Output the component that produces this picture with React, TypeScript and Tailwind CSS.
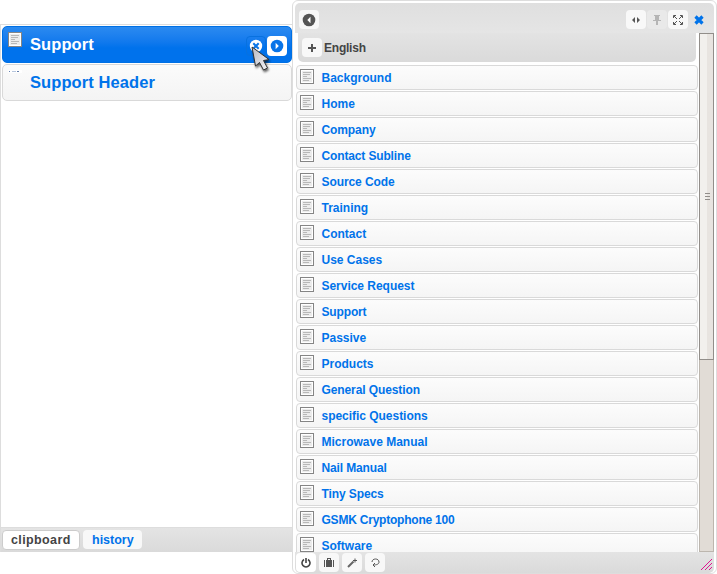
import React from "react";

const pages: { name: string; tracking?: string }[] = [
  { name: "Background" },
  { name: "Home" },
  { name: "Company", tracking: "tracking-[-0.1px]" },
  { name: "Contact Subline", tracking: "tracking-[-0.14px]" },
  { name: "Source Code", tracking: "tracking-[-0.08px]" },
  { name: "Training" },
  { name: "Contact" },
  { name: "Use Cases" },
  { name: "Service Request", tracking: "tracking-[-0.03px]" },
  { name: "Support", tracking: "tracking-[-0.15px]" },
  { name: "Passive" },
  { name: "Products" },
  { name: "General Question", tracking: "tracking-[-0.1px]" },
  { name: "specific Questions", tracking: "tracking-[-0.03px]" },
  { name: "Microwave Manual" },
  { name: "Nail Manual", tracking: "tracking-[-0.14px]" },
  { name: "Tiny Specs", tracking: "tracking-[-0.1px]" },
  { name: "GSMK Cryptophone 100", tracking: "tracking-[-0.22px]" },
  { name: "Software" },
];

function PageIcon() {
  return (
    <svg width="14" height="15" viewBox="0 0 14 15" shapeRendering="crispEdges" className="block shrink-0">
      <rect x="0.5" y="0.5" width="13" height="14" fill="#fff" stroke="#858585" />
      <rect x="2" y="2" width="10" height="11" fill="#ececec" />
      <path d="M3 3.5h8M3 5.5h7M3 7.5h4M3 9.5h8M3 11.5h6" stroke="#b8b8b8" />
    </svg>
  );
}

function Btn({ children, className = "bg-[#f8f8f8]" }: { children?: React.ReactNode; className?: string }) {
  return <div className={`flex h-[19px] w-[20px] shrink-0 items-center justify-center rounded-[4px] ${className}`}>{children}</div>;
}

function Clipboard() {
  return (
    <section className="mt-6 flex h-[528px] w-[292px] flex-col border-l border-t border-[#ddd] bg-white">
      <div className="ml-px mt-px flex h-[37px] w-[290px] items-start rounded-[5px] border border-[#0070e4] bg-linear-to-b from-[#2b8af0] to-[#0072ec] to-60%">
        <div className="ml-[5px] mt-[5px]"><PageIcon /></div>
        <div className="ml-[8px] mt-[7px] w-[212px] text-[16.5px] leading-5 tracking-[0.08px] text-white">Support</div>
        <div className="ml-[4px] mt-[9px] flex h-[20px] w-[20px] items-center justify-center rounded-[4px] border border-[#0871df]">
          <svg width="14" height="14" viewBox="0 0 14 14"><circle cx="7" cy="7" r="6.2" fill="#fff" /><path d="m4.3 4.3 5.4 5.4m0-5.4-5.4 5.4" stroke="#0874e8" strokeWidth="2" /></svg>
        </div>
        <div className="ml-px mt-[9px] flex h-[20px] w-[20px] items-center justify-center rounded-[4px] bg-white">
          <svg width="14" height="14" viewBox="0 0 14 14"><circle cx="7" cy="7" r="6.3" fill="#0874e8" /><path d="m5.6 3.8 3.2 3.2-3.2 3.2z" fill="#fff" /></svg>
        </div>
      </div>
      <div className="ml-px mt-px flex h-[37px] w-[290px] items-start rounded-[5px] border border-[#d9d9d9] bg-linear-to-b from-[#fbfbfb] to-[#f4f4f4]">
        <svg width="14" height="3" viewBox="0 0 14 3" shapeRendering="crispEdges" className="ml-[5px] mt-[5px]"><rect width="14" height="3" fill="#fff" /><path d="M1 1.5h1M9 1.5h2" stroke="#647fad" /><path d="M4 1.5h4" stroke="#b7c6dd" /></svg>
        <div className="ml-[8px] mt-[7px] text-[16.5px] leading-5 tracking-[0.08px]">Support Header</div>
      </div>
      <div className="mt-auto flex h-[25px] gap-[3px] border-t border-[#ddd] bg-linear-to-b from-[#e4e4e4] to-[#dadada] pl-px pt-[2px] text-[12.5px] leading-[19px]">
        <div className="h-[20px] w-[78px] rounded-[4px] border border-[#ccc] bg-white pl-[8px] tracking-[0.38px] text-[#444]">clipboard</div>
        <div className="h-[19px] w-[59px] rounded-[4px] bg-[#f8f8f8] pl-[9px] pt-px tracking-[0px]">history</div>
      </div>
    </section>
  );
}

export default function App() {
  return (
    <main className="relative flex h-[574px] w-[717px] overflow-hidden bg-white font-['Liberation_Sans',Arial,sans-serif] font-bold text-[#0073ea]">
      <Clipboard />
      <section className="flex h-[574px] w-[425px] flex-col rounded-[6px] border border-[#ddd] bg-white px-[2px] pb-0 pt-[2px]">
        <header className="flex h-[30px] items-start rounded-[5px] rounded-b-none bg-linear-to-b from-[#dfdfdf] to-[#e5e5e5] pl-[4px] pt-[7px]">
          <Btn>
            <svg width="14" height="14" viewBox="0 0 14 14"><circle cx="7" cy="7" r="6.3" fill="#555" /><path d="m8.5 3.8-3.2 3.2 3.2 3.2z" fill="#fff" /></svg>
          </Btn>
          <div className="ml-auto mr-[5px] flex gap-[1px]">
            <Btn><svg width="8" height="6" viewBox="0 0 8 6"><path d="M0 3 3 0v6zM8 3 5 0v6z" fill="#555" /></svg></Btn>
            <Btn className="bg-[#e9e9e9]"><svg width="8" height="10" viewBox="0 0 8 10" fill="#b5b5b5" shapeRendering="crispEdges"><path d="M1 0h6v1H6v4h2v1H0V5h2V1H1zM3 6h2v4H3z" /></svg></Btn>
            <Btn><svg width="10" height="10" viewBox="0 0 10 10" fill="none" stroke="#555"><path d="M3 .5H.5V3M7 .5h2.5V3M.5 7v2.5H3M9.5 7v2.5H7M1 1l3 3m5-3L6 4M1 9l3-3m5 3L6 6" /></svg></Btn>
            <Btn className=""><svg width="10" height="10" viewBox="0 0 10 10"><path d="m1.5 1.5 7 7m0-7-7 7" stroke="#0073ea" strokeWidth="3.2" /></svg></Btn>
          </div>
        </header>
        <div className="flex h-[519px] shrink-0 overflow-hidden">
          <div className="w-[403px] shrink-0">
            <div className="ml-[3px] flex h-[29px] w-[398px] rounded-b-[5px] bg-linear-to-b from-[#e3e3e3] to-[#dadada] pl-[4px] pt-[5px] text-[12px] leading-[20px] text-[#444]">
              <Btn><svg width="8" height="8" viewBox="0 0 8 8" shapeRendering="crispEdges"><path d="M3 0h2v3h3v2H5v3H3V5H0V3h3z" fill="#555" /></svg></Btn>
              <span className="ml-[2px] tracking-[-0.22px]">English</span>
            </div>
            <div className="ml-px mt-[3px] flex w-[402px] flex-col gap-px">
              {pages.map(({ name, tracking = "" }) => (
                <div key={name} className="flex h-[25px] shrink-0 items-start rounded-[4px] border border-[#d9d9d9] bg-linear-to-b from-[#fcfcfc] to-[#f5f5f5] pl-[3px] pt-[3px]">
                  <PageIcon />
                  <span className={`ml-[7.5px] text-[12px] leading-[18px] ${tracking}`}>{name}</span>
                </div>
              ))}
            </div>
          </div>
          <div className="ml-px h-[519px] w-[15px] border border-[#bcb6ae] bg-[#e1dcd6]">
            <div className="-ml-px -mt-px flex h-[327px] w-[15px] items-center justify-center border border-[#928e8a] bg-linear-to-r from-[#f2f0ed] from-50% to-[#e8e4e0] to-50%">
              <svg width="5" height="7" viewBox="0 0 5 7" shapeRendering="crispEdges" className="ml-[2px]"><path d="M0 .5h5m-5 3h5m-5 3h5" stroke="#928e8a" /></svg>
            </div>
          </div>
        </div>
        <footer className="flex h-[21px] shrink-0 gap-[3px] rounded-b-[5px] bg-linear-to-b from-[#e4e4e4] to-[#dadada] pl-px pt-px">
          <Btn className="bg-white"><svg width="10" height="10" viewBox="0 0 10 10" fill="none" stroke="#444" strokeWidth="1.6"><path d="M3 1.5a4 4 0 1 0 4 0M5 0v5" /></svg></Btn>
          <Btn><svg width="10" height="9" viewBox="0 0 10 9"><path d="M0 2h1v7H0zm2 0h1V0h4v2h1v7H2zm7 0h1v7H9zM4 1v1h2V1z" fill="#555" fillRule="evenodd" /></svg></Btn>
          <Btn><svg width="10" height="10" viewBox="0 0 10 10"><path d="m1 9 5.5-5.5" stroke="#666" strokeWidth="2" /><path d="M6 2h1.5V.5h1V2H10v1H8.500v1.500h-1V3H6z" fill="#555" /></svg></Btn>
          <Btn><svg width="9" height="10" viewBox="0 0 9 10" fill="none" stroke="#555"><path d="M1 4c0-4 7-4 7 0 0 2-2 3-6 3M4 5 2 7l2 2" /></svg></Btn>
          <svg width="12" height="12" viewBox="0 0 12 12" className="ml-auto mr-px mt-[6px]"><path d="M0 11 11 0M4 11l7-7M8 11l3-3" stroke="#dd168f" /></svg>
        </footer>
      </section>
      <svg width="20" height="27" viewBox="0 0 20 27" className="absolute left-[251px] top-[46px] drop-shadow-[1px_2px_1px_rgba(0,0,0,0.6)]">
        <defs>
          <linearGradient id="pointer" x1="0" y1="0" x2="1" y2="1">
            <stop stopColor="#b8b8c0" />
            <stop offset="1" stopColor="#f5f5f8" />
          </linearGradient>
        </defs>
        <path d="m1 1 3.500 19 4-3.500 4 7.500 4-2-4-7.500 5.500-1z" fill="url(#pointer)" stroke="#333" strokeLinejoin="round" />
      </svg>
    </main>
  );
}
